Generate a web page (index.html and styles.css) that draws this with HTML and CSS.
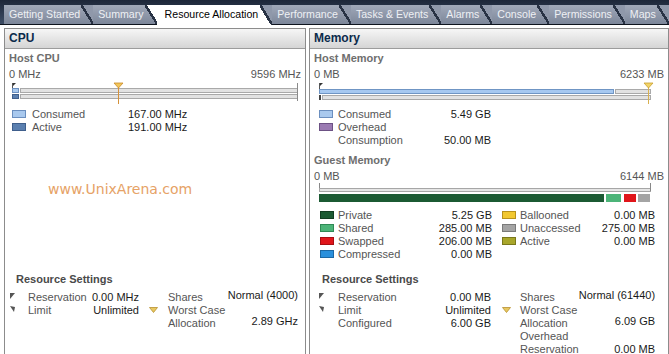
FILE: index.html
```html
<!DOCTYPE html>
<html lang="en">
<head>
    <meta charset="UTF-8">
    <title>Resource Allocation</title>
    <link rel="stylesheet" href="styles.css">
</head>
<body>
    <!-- Pestañas -->
    <div class="tabs">
        <div class="tab">Getting Started</div>
        <div class="tab pre">Summary</div>
        <div class="tab active">Resource Allocation</div>
        <div class="tab">Performance</div>
        <div class="tab">Tasks &amp; Events</div>
        <div class="tab">Alarms</div>
        <div class="tab">Console</div>
        <div class="tab">Permissions</div>
        <div class="tab">Maps</div>
        <div class="tab stub"></div>
    </div>

    <div class="content">
        <!-- CPU -->
        <div class="panel cpu">
            <div class="panel-head">CPU</div>
            <div class="panel-body">
                <div class="section-title">Host CPU</div>
                <div class="scale"><span>0 MHz</span><span>9596 MHz</span></div>
                <svg class="bar" width="292" height="24">
                    <polygon points="3,2 7,2 3,6" fill="#333"/>
                    <line x1="3.5" y1="2" x2="3.5" y2="8" stroke="#555"/>
                    <rect x="3.5" y="7.5" width="6" height="4" fill="#a9c9ee" stroke="#6b8fbf"/>
                    <rect x="11.5" y="7.5" width="277" height="4" fill="#e2e2e2" stroke="#a9a9a9"/>
                    <rect x="3.5" y="13.5" width="6" height="4" fill="#5b80b0" stroke="#3f5f8c"/>
                    <rect x="11.5" y="13.5" width="277" height="4" fill="#e2e2e2" stroke="#a9a9a9"/>
                    <line x1="288.5" y1="2" x2="288.5" y2="20" stroke="#8a8a8a"/>
                    <line x1="109.5" y1="6" x2="109.5" y2="23" stroke="#d4913a"/>
                    <polygon points="105,2 114,2 109.5,7" fill="#f2c65a" stroke="#c98a2a" stroke-width="0.8"/>
                </svg>
                <div class="legend cpu-legend">
                    <span class="sw sw-consumed"></span><span class="lbl">Consumed</span><span class="val">167.00 MHz</span>
                    <span class="sw sw-active"></span><span class="lbl">Active</span><span class="val">191.00 MHz</span>
                </div>

                <div class="watermark">www.UnixArena.com</div>

                <div class="rs-title cpu-rs-title">Resource Settings</div>
                <div class="rs cpu-rs">
                    <div class="rs-left">
                        <span class="ico"><svg width="6" height="7"><polygon points="0,0 5,0 0,6" fill="#555"/></svg></span>
                        <span class="lbl">Reservation</span><span class="val">0.00 MHz</span>
                        <span class="ico"><svg width="6" height="7"><polygon points="0,0 5,1 4,6" fill="#555"/></svg></span>
                        <span class="lbl">Limit</span><span class="val">Unlimited</span>
                    </div>
                    <div class="rs-arrow">
                        <svg width="9" height="6"><polygon points="0.5,0.5 8.5,0.5 4.5,5.5" fill="#e8c860" stroke="#b89030" stroke-width="0.8"/></svg>
                    </div>
                    <div class="rs-right">
                        <span class="lbl">Shares</span><span class="val up">Normal (4000)</span>
                        <span class="lbl">Worst Case</span><span></span>
                        <span class="lbl">Allocation</span><span class="val up">2.89 GHz</span>
                    </div>
                </div>
            </div>
        </div>

        <!-- Memoria -->
        <div class="panel memory">
            <div class="panel-head">Memory</div>
            <div class="panel-body">
                <div class="section-title">Host Memory</div>
                <div class="scale"><span>0 MB</span><span>6233 MB</span></div>
                <svg class="bar" width="345" height="24">
                    <polygon points="5,2 9,2 5,6" fill="#333"/>
                    <line x1="5.5" y1="2" x2="5.5" y2="8" stroke="#555"/>
                    <rect x="5.5" y="8.5" width="294" height="4" fill="#a6c8f0" stroke="#6f95c4"/>
                    <rect x="301.5" y="8.5" width="35" height="4" fill="#e2e2e2" stroke="#a9a9a9"/>
                    <rect x="5" y="14" width="2" height="5" fill="#444"/>
                    <rect x="8.5" y="14.5" width="328" height="4" fill="#e2e2e2" stroke="#a9a9a9"/>
                    <line x1="334.5" y1="6" x2="334.5" y2="23" stroke="#d8b050"/>
                    <polygon points="330,2 339,2 334.5,7" fill="#f2d468" stroke="#c8a030" stroke-width="0.8"/>
                </svg>
                <div class="legend host-legend">
                    <span class="sw sw-consumed"></span><span class="lbl">Consumed</span><span class="val">5.49 GB</span>
                    <span class="sw sw-overhead"></span><span class="lbl">Overhead</span><span class="val"></span>
                    <span></span><span class="lbl">Consumption</span><span class="val">50.00 MB</span>
                </div>

                <div class="section-title guest-title">Guest Memory</div>
                <div class="scale"><span>0 MB</span><span>6144 MB</span></div>
                <svg class="bar guest-bar" width="345" height="22">
                    <line x1="5.5" y1="0" x2="5.5" y2="8" stroke="#888"/>
                    <rect x="5.5" y="5.5" width="331" height="3" fill="#e6e6e6" stroke="#a6a6a6"/>
                    <line x1="336.5" y1="0" x2="336.5" y2="8" stroke="#888"/>
                    <rect x="5" y="11" width="285" height="8" fill="#1b5a33"/>
                    <rect x="292" y="11" width="15" height="8" fill="#4cb478"/>
                    <rect x="310" y="11" width="12" height="8" fill="#e0151a"/>
                    <rect x="324" y="11" width="12" height="8" fill="#a4a4a4"/>
                </svg>
                <div class="legend guest-legend">
                    <span class="sw sw-private"></span><span class="lbl">Private</span><span class="val">5.25 GB</span><span></span>
                    <span class="sw sw-ballooned"></span><span class="lbl">Ballooned</span><span class="val">0.00 MB</span>
                    <span class="sw sw-shared"></span><span class="lbl">Shared</span><span class="val">285.00 MB</span><span></span>
                    <span class="sw sw-unaccessed"></span><span class="lbl">Unaccessed</span><span class="val">275.00 MB</span>
                    <span class="sw sw-swapped"></span><span class="lbl">Swapped</span><span class="val">206.00 MB</span><span></span>
                    <span class="sw sw-gactive"></span><span class="lbl">Active</span><span class="val">0.00 MB</span>
                    <span class="sw sw-compressed"></span><span class="lbl">Compressed</span><span class="val">0.00 MB</span>
                </div>

                <div class="rs-title mem-rs-title">Resource Settings</div>
                <div class="rs mem-rs">
                    <div class="rs-left">
                        <span class="ico"><svg width="6" height="7"><polygon points="0,0 5,0 0,6" fill="#555"/></svg></span>
                        <span class="lbl">Reservation</span><span class="val">0.00 MB</span>
                        <span class="ico"><svg width="6" height="7"><polygon points="0,0 5,1 4,6" fill="#555"/></svg></span>
                        <span class="lbl">Limit</span><span class="val">Unlimited</span>
                        <span></span><span class="lbl">Configured</span><span class="val">6.00 GB</span>
                    </div>
                    <div class="rs-arrow">
                        <svg width="9" height="6"><polygon points="0.5,0.5 8.5,0.5 4.5,5.5" fill="#e8c860" stroke="#b89030" stroke-width="0.8"/></svg>
                    </div>
                    <div class="rs-right">
                        <span class="lbl">Shares</span><span class="val up">Normal (61440)</span>
                        <span class="lbl">Worst Case</span><span></span>
                        <span class="lbl">Allocation</span><span class="val up">6.09 GB</span>
                        <span class="lbl">Overhead</span><span></span>
                        <span class="lbl">Reservation</span><span class="val">0.00 MB</span>
                    </div>
                </div>
            </div>
        </div>
    </div>
</body>
</html>
```

FILE: styles.css
```css
html, body {
    height: 354px;
    overflow: hidden;
}
body {
    margin: 0;
    font-family: "Liberation Sans", Arial, sans-serif;
    font-size: 11px;
    background: #fff;
    color: #222;
}

/* Pestañas */
.tabs {
    display: flex;
    align-items: flex-end;
    height: 24px;
    padding-left: 4px;
    background: linear-gradient(#1d2739, #3d4d66);
    border-bottom: 1px solid #0e141e;
}
.tab {
    position: relative;
    flex: none;
    height: 19px;
    line-height: 19px;
    padding: 0 13px 0 5px;
    font-size: 10.6px;
    color: #eef0f4;
    background: linear-gradient(#a0a8b8, #7d879a);
    white-space: nowrap;
}
.tab::after {
    content: "";
    position: absolute;
    right: 0;
    top: 0;
    width: 12px;
    height: 100%;
    background: linear-gradient(to top right, transparent 45%, #283244 45%, #283244 57%, #8f98aa 57%);
}
.tab.pre::after {
    background: linear-gradient(to top right, transparent 45%, #283244 45%, #283244 57%, #fff 57%);
}
.tab.active {
    height: 20px;
    margin-bottom: -1px;
    padding-left: 8px;
    padding-right: 14px;
    background: #fff;
    color: #000;
}
.tab.stub {
    width: 20px;
}

/* Paneles */
.content {
    display: flex;
    gap: 3px;
    padding: 3px 2px 0 4px;
}
.panel {
    flex: none;
    height: 340px;
    border: 1px solid #8c8c8c;
    border-bottom: none;
}
.cpu { width: 300px; }
.memory { width: 358px; }
.panel-head {
    height: 19px;
    line-height: 19px;
    padding-left: 4px;
    border-bottom: 1px solid #9c9c9c;
    background: linear-gradient(#f6f6f6, #d5d5d5);
    font-size: 12px;
    font-weight: bold;
    color: #0c2b4b;
}
.panel-body {
    padding: 0 4px;
}
.section-title {
    margin-top: 2px;
    line-height: 14px;
    font-weight: bold;
    color: #6e6e6e;
}
.guest-title {
    margin-top: 7px;
}
.scale {
    display: flex;
    justify-content: space-between;
    margin-top: 3px;
    line-height: 13px;
    color: #555;
}
.bar {
    display: block;
}

/* Leyendas */
.legend {
    display: grid;
    grid-auto-rows: 13px;
    align-items: center;
    margin-top: 2px;
    white-space: nowrap;
}
.cpu-legend {
    grid-template-columns: 20px 96px 58px;
    margin-left: 3px;
}
.host-legend {
    grid-template-columns: 19px 95px 58px;
    margin-left: 5px;
}
.guest-legend {
    grid-template-columns: 18px 96px 58px 10px 18px 75px 60px;
    margin-left: 6px;
    margin-top: 3px;
}
.legend .lbl { color: #555; }
.legend .val { text-align: right; color: #1a1a1a; }
.sw {
    display: block;
    width: 12px;
    height: 6px;
    border: 1px solid #777;
}
.sw-consumed { background: #a9c9ee; border-color: #6b8fbf; }
.sw-active { background: #5b80b0; border-color: #3f5f8c; }
.sw-overhead { background: #9a7ab2; border-color: #6c5184; }
.sw-private { background: #1b5a33; border-color: #123d22; }
.sw-shared { background: #4cb478; border-color: #2f8a55; }
.sw-swapped { background: #e0151a; border-color: #a80e12; }
.sw-compressed { background: #2a90dc; border-color: #1c68a4; }
.sw-ballooned { background: #f2c830; border-color: #b8921c; }
.sw-unaccessed { background: #a4a4a4; border-color: #7a7a7a; }
.sw-gactive { background: #a8a62a; border-color: #7a781c; }

.watermark {
    margin: 47px 0 0 39px;
    font-family: "DejaVu Sans", sans-serif;
    font-size: 14px;
    line-height: 18px;
    color: #e6a266;
}

/* Resource Settings */
.rs-title {
    line-height: 14px;
    font-weight: bold;
    color: #4a4a4a;
}
.cpu-rs-title { margin: 74px 0 0 7px; }
.mem-rs-title { margin: 12px 0 0 8px; }
.rs {
    display: flex;
    margin-top: 4px;
    white-space: nowrap;
}
.rs-left, .rs-right {
    display: grid;
    grid-auto-rows: 13px;
    align-items: center;
}
.rs-left {
    grid-template-columns: 18px 1fr auto;
}
.rs-right {
    grid-template-columns: 1fr auto;
}
.rs .lbl { color: #555; }
.rs .val { text-align: right; color: #1a1a1a; }
.rs .val.up { margin-top: -3px; }
.ico svg { display: block; }
.rs-arrow {
    width: 29px;
}
.rs-arrow svg {
    display: block;
    margin-top: 17px;
}
.cpu-rs { margin-left: 1px; }
.cpu-rs .rs-left { width: 129px; }
.cpu-rs .rs-right { width: 130px; }
.cpu-rs .rs-arrow svg { margin-left: 10px; }
.mem-rs { margin-left: 5px; }
.mem-rs .rs-left { width: 172px; grid-template-columns: 19px 1fr auto; }
.mem-rs .rs-right { width: 132px; }
.mem-rs .rs-arrow svg { margin-left: 11px; }
```
